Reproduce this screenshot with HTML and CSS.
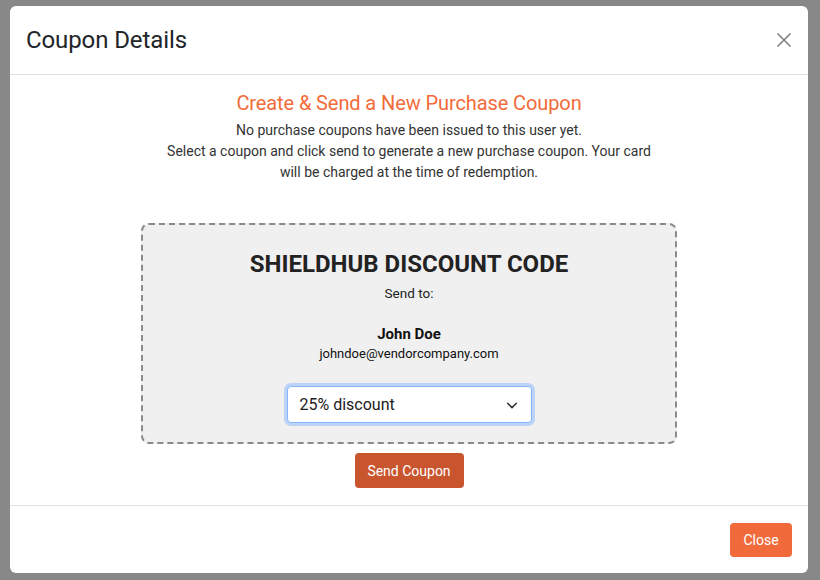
FILE: index.html
```html
<!DOCTYPE html>
<html lang="en">
<head>
<meta charset="utf-8">
<title>Coupon Details</title>
<link rel="stylesheet" href="styles.css">
</head>
<body>
<div class="modal">
  <div class="modal-header">
    <h1 class="modal-title">Coupon Details</h1>
    <button class="btn-x" aria-label="Close">
      <svg width="16" height="16" viewBox="0 0 16 16"><path d="M1.5 1.5 L14.5 14.5 M14.5 1.5 L1.5 14.5" stroke="#808080" stroke-width="1.6" fill="none"/></svg>
    </button>
  </div>
  <div class="modal-body">
    <h2 class="lead">Create &amp; Send a New Purchase Coupon</h2>
    <p class="info">No purchase coupons have been issued to this user yet.<br>Select a coupon and click send to generate a new purchase coupon. Your card will be charged at the time of redemption.</p>
    <div class="coupon">
      <div class="coupon-title">SHIELDHUB DISCOUNT CODE</div>
      <div class="send-to">Send to:</div>
      <div class="name">John Doe</div>
      <div class="email">johndoe@vendorcompany.com</div>
      <div class="select">
        <span>25% discount</span>
        <svg width="14" height="14" viewBox="0 0 16 16"><path d="M3 6 L8 11 L13 6" stroke="#333" stroke-width="1.7" fill="none" stroke-linecap="round" stroke-linejoin="round"/></svg>
      </div>
    </div>
    <button class="btn-send">Send Coupon</button>
  </div>
  <div class="modal-footer">
    <button class="btn-close">Close</button>
  </div>
</div>
</body>
</html>
```
FILE: styles.css
```css
* { box-sizing: border-box; }
html, body { margin: 0; padding: 0; }
body {
  background: #888888;
  font-family: Roboto, "Liberation Sans", Arial, sans-serif;
  width: 820px;
  height: 580px;
  overflow: hidden;
  padding: 6px 0 0 10px;
}
.modal {
  width: 798px;
  height: 567px;
  background: #fff;
  border-radius: 6px;
  display: flex;
  flex-direction: column;
}
.modal-header {
  height: 69px;
  border-bottom: 1px solid #dee2e6;
  display: flex;
  align-items: center;
  justify-content: space-between;
  padding: 0 16px;
}
.modal-title {
  margin: 0;
  font-size: 24px;
  font-weight: 400;
  color: #212529;
  line-height: 1.2;
  letter-spacing: -0.1px;
}
.btn-x {
  background: none;
  border: 0;
  padding: 0;
  width: 16px;
  height: 16px;
  display: flex;
}
.modal-body {
  flex: 1;
  display: flex;
  flex-direction: column;
  align-items: center;
  padding-top: 14px;
}
.lead {
  margin: 0;
  font-size: 20px;
  font-weight: 400;
  color: #f26b3a;
  line-height: 28px;
  letter-spacing: -0.1px;
}
.info {
  margin: 3px 0 0;
  width: 500px;
  text-align: center;
  font-size: 14px;
  line-height: 21px;
  color: #333;
}
.coupon {
  margin-top: 40px;
  width: 536px;
  height: 221px;
  background: #f0f0f0;
  border: 2px dashed #8a8a8a;
  border-radius: 8px;
  display: flex;
  flex-direction: column;
  align-items: center;
  padding-top: 25px;
}
.coupon-title {
  font-size: 24px;
  font-weight: 700;
  line-height: 28px;
  color: #222;
}
.send-to {
  margin-top: 5px;
  font-size: 13.5px;
  line-height: 20px;
  color: #222;
}
.name {
  margin-top: 21px;
  font-size: 15px;
  font-weight: 700;
  line-height: 20px;
  color: #111;
}
.email {
  font-size: 13px;
  line-height: 20px;
  color: #111;
}
.select {
  margin-top: 22px;
  width: 245px;
  height: 37px;
  background: #fff;
  border: 1px solid #86b7fe;
  border-radius: 4px;
  box-shadow: 0 0 0 3px #bcd3f7;
  display: flex;
  align-items: center;
  justify-content: space-between;
  padding: 0 12px;
  font-size: 16px;
  color: #222;
}
.btn-send {
  margin-top: 9px;
  width: 109px;
  height: 35px;
  background: #c9552f;
  color: #fff;
  border: 0;
  border-radius: 4px;
  font-family: inherit;
  font-size: 14px;
}
.modal-footer {
  height: 68px;
  border-top: 1px solid #dee2e6;
  display: flex;
  align-items: center;
  justify-content: flex-end;
  padding: 0 16px;
}
.btn-close {
  width: 62px;
  height: 34px;
  background: #f06a3c;
  color: #fff;
  border: 0;
  border-radius: 4px;
  font-family: inherit;
  font-size: 14px;
}
```
